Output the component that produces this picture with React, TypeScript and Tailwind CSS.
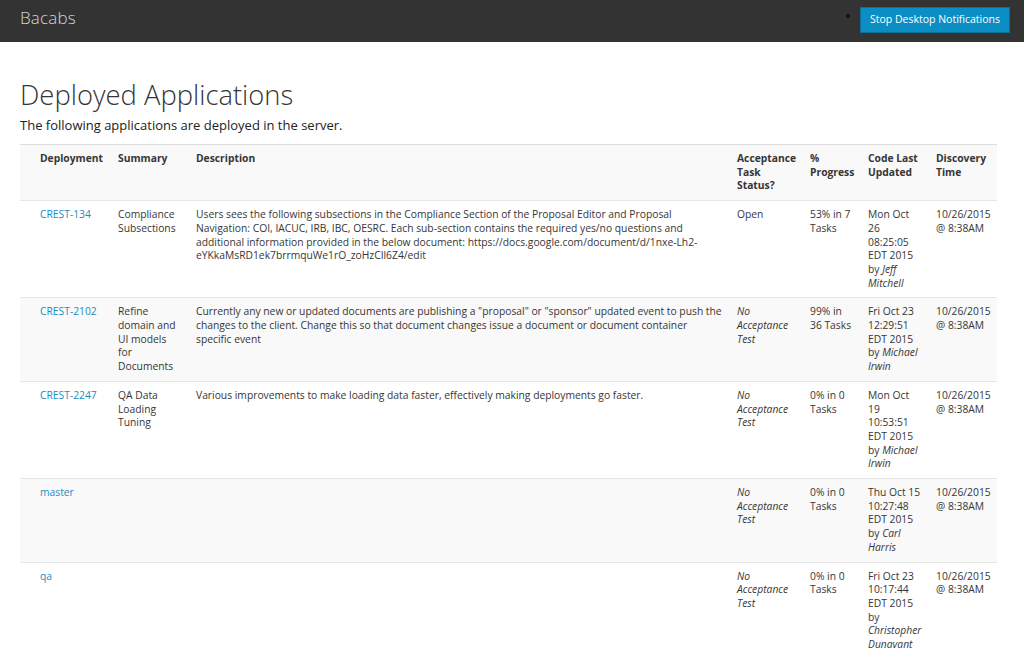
import React from "react";

type Row = {
  dep: string;
  summary: string;
  desc: string;
  status: React.ReactNode;
  progress: string;
  code: string;
  by: string;
  disc: string;
};

const noTest = <i>No Acceptance Test</i>;

const rows: Row[] = [
  {
    dep: "CREST-134",
    summary: "Compliance Subsections",
    desc: "Users sees the following subsections in the Compliance Section of the Proposal Editor and Proposal Navigation: COI, IACUC, IRB, IBC, OESRC. Each sub-section contains the required yes/no questions and additional information provided in the below document: https://docs.google.com/document/d/1nxe-Lh2-eYKkaMsRD1ek7brrmquWe1rO_zoHzCIl6Z4/edit",
    status: "Open",
    progress: "53% in 7 Tasks",
    code: "Mon Oct 26 08:25:05 EDT 2015",
    by: "Jeff Mitchell",
    disc: "10/26/2015 @ 8:38AM",
  },
  {
    dep: "CREST-2102",
    summary: "Refine domain and UI models for Documents",
    desc: 'Currently any new or updated documents are publishing a "proposal" or "sponsor" updated event to push the changes to the client. Change this so that document changes issue a document or document container specific event',
    status: noTest,
    progress: "99% in 36 Tasks",
    code: "Fri Oct 23 12:29:51 EDT 2015",
    by: "Michael Irwin",
    disc: "10/26/2015 @ 8:38AM",
  },
  {
    dep: "CREST-2247",
    summary: "QA Data Loading Tuning",
    desc: "Various improvements to make loading data faster, effectively making deployments go faster.",
    status: noTest,
    progress: "0% in 0 Tasks",
    code: "Mon Oct 19 10:53:51 EDT 2015",
    by: "Michael Irwin",
    disc: "10/26/2015 @ 8:38AM",
  },
  {
    dep: "master",
    summary: "",
    desc: "",
    status: noTest,
    progress: "0% in 0 Tasks",
    code: "Thu Oct 15 10:27:48 EDT 2015",
    by: "Carl Harris",
    disc: "10/26/2015 @ 8:38AM",
  },
  {
    dep: "qa",
    summary: "",
    desc: "",
    status: noTest,
    progress: "0% in 0 Tasks",
    code: "Fri Oct 23 10:17:44 EDT 2015",
    by: "Christopher Dunavant",
    disc: "10/26/2015 @ 8:38AM",
  },
];

const base = "align-top py-[7px] pl-2";
const pads = [
  "pl-5 pr-[10px]",
  "pr-[10px]",
  "pr-[5px]",
  "pr-[3px]",
  "pr-[6px]",
  "pr-[7px]",
  "pr-[4px]",
];

export default function App() {
  return (
    <div
      className="min-h-screen bg-white text-[#363636]"
      style={{ fontFamily: "'Open Sans', 'Liberation Sans', sans-serif" }}
    >
      <header className="h-[42px] bg-[#333333] flex items-center justify-between pl-5 pr-[14px]">
        <span className="text-[17px] font-light text-[#d4d4d4] tracking-[0.2px] -mt-[6px]">Bacabs</span>
        <div className="flex items-center gap-[10px]">
          <span className="w-[4px] h-[4px] rounded-full bg-[#111] -mt-[11px]" />
          <button className="h-[26px] w-[150px] -mt-[3px] bg-[#0b8ec3] border border-[#0a6f99] text-white text-[10.5px]">
            Stop Desktop Notifications
          </button>
        </div>
      </header>

      <main className="px-5 pt-[35px]">
        <h1 className="text-[27.4px] font-light leading-[36px] text-[#363636]">Deployed Applications</h1>
        <p className="text-[13px] mt-[3px] leading-[18px] text-[#222]">The following applications are deployed in the server.</p>

        <table className="mt-[10px] w-[977px] table-fixed border-collapse text-[10.3px] leading-[13.7px]">
          <colgroup>
            <col className="w-[90px]" />
            <col className="w-[78px]" />
            <col className="w-[541px]" />
            <col className="w-[73px]" />
            <col className="w-[58px]" />
            <col className="w-[68px]" />
            <col className="w-[69px]" />
          </colgroup>
          <thead>
            <tr className="bg-[#f9f9f9] border-t border-[#dddddd] h-[56px]">
              {[
                "Deployment",
                "Summary",
                "Description",
                "Acceptance Task Status?",
                "% Progress",
                "Code Last Updated",
                "Discovery Time",
              ].map((h, i) => (
                <th key={h} className={`${base} ${pads[i]} text-left font-bold text-[#363636]`}>
                  {h}
                </th>
              ))}
            </tr>
          </thead>
          <tbody>
            {rows.map((r, i) => (
              <tr
                key={r.dep}
                className={`border-t border-[#e6e6e6] ${i % 2 === 1 ? "bg-[#f9f9f9]" : "bg-white"}`}
              >
                <td className={`${base} ${pads[0]}`}>
                  <a className="text-[#1a8cc3]">{r.dep}</a>
                </td>
                <td className={`${base} ${pads[1]}`}>{r.summary}</td>
                <td className={`${base} ${pads[2]} break-words`}>{r.desc}</td>
                <td className={`${base} ${pads[3]}`}>{r.status}</td>
                <td className={`${base} ${pads[4]}`}>{r.progress}</td>
                <td className={`${base} ${pads[5]}`}>
                  {r.code} by <i>{r.by}</i>
                </td>
                <td className={`${base} ${pads[6]}`}>{r.disc}</td>
              </tr>
            ))}
          </tbody>
        </table>
      </main>
    </div>
  );
}
